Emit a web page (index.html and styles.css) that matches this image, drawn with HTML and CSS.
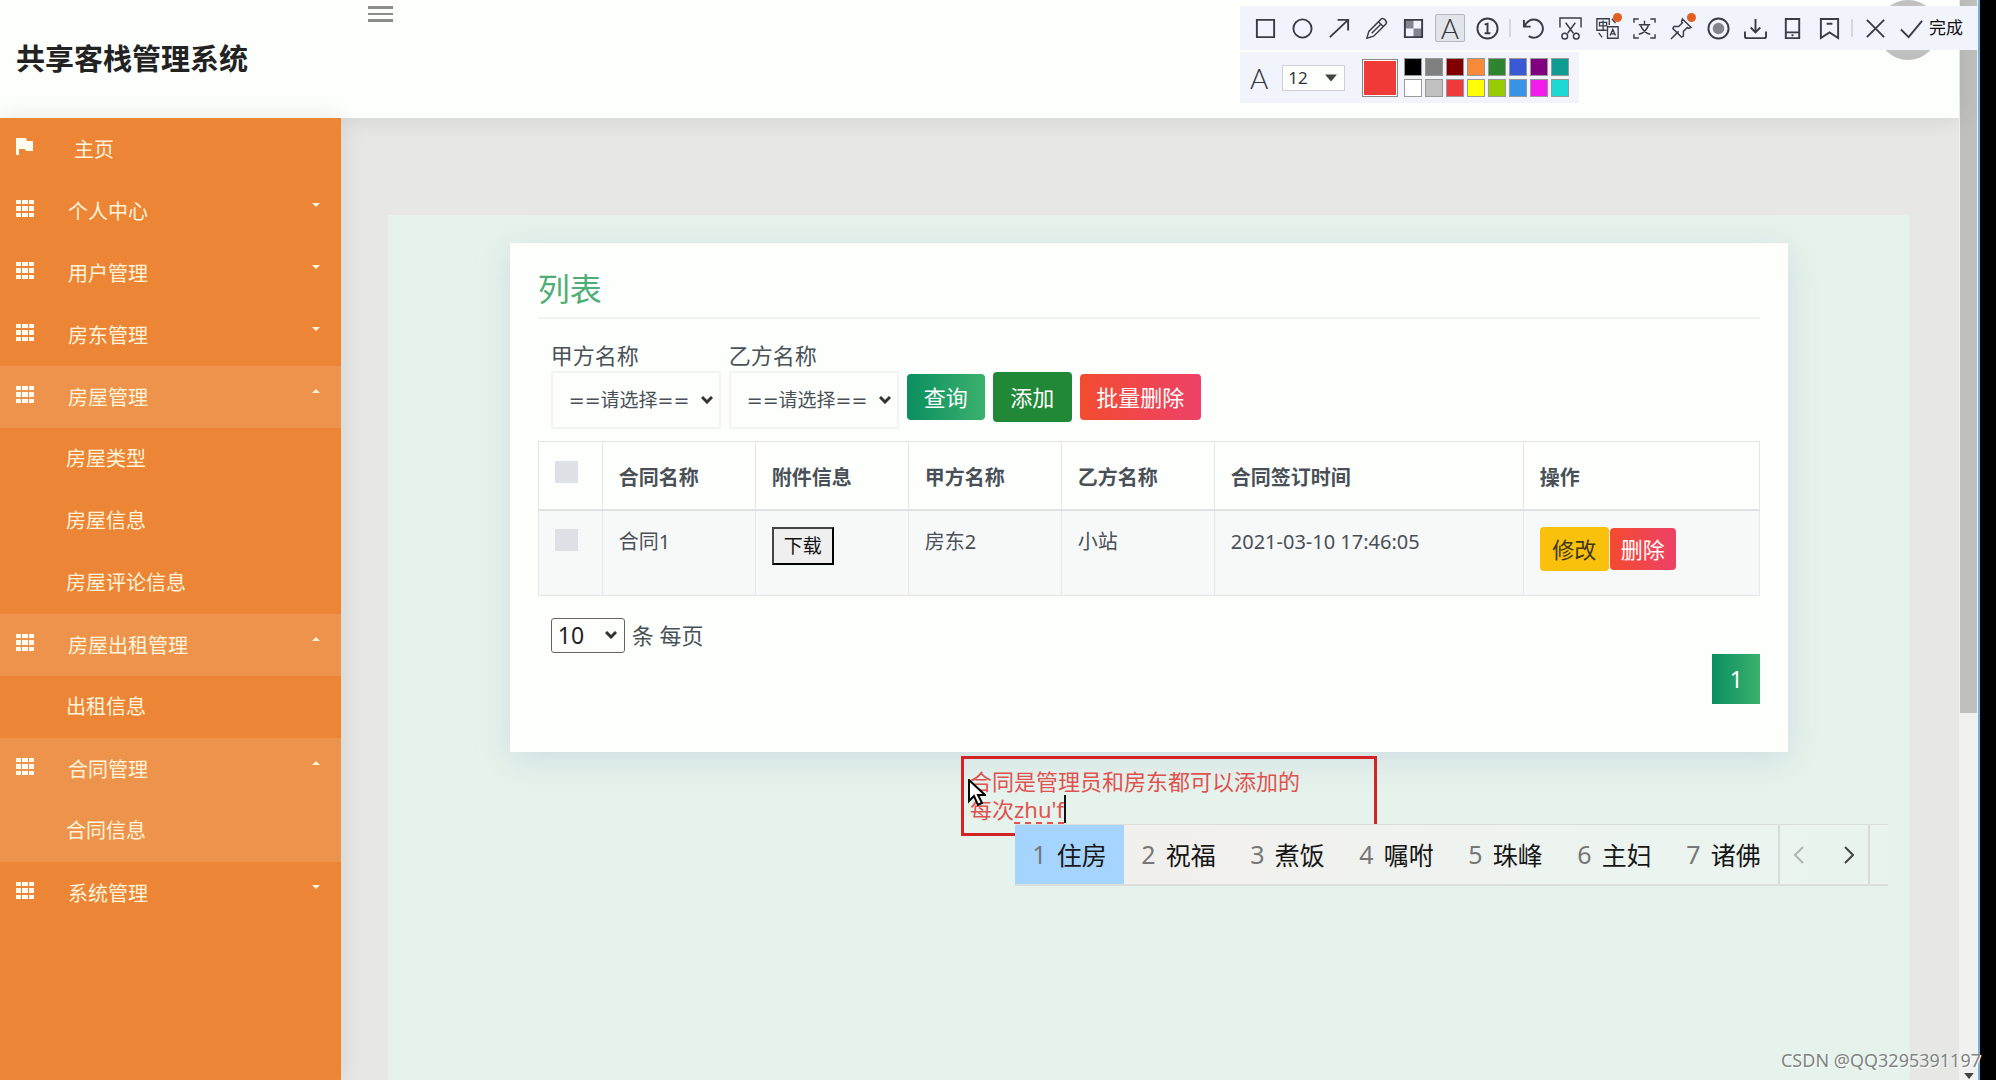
FILE: index.html
```html
<!DOCTYPE html>
<html lang="zh-CN">
<head>
<meta charset="utf-8">
<title>共享客栈管理系统</title>
<link rel="stylesheet" href="styles.css">
</head>
<body>
<svg class="sprite" aria-hidden="true">
  <symbol id="grid" viewBox="0 0 18 17"><path d="M0 0h5v4H0zM6 0h6v4H6zM13 0h5v4h-5zM0 6h5v5H0zM6 6h6v5H6zM13 6h5v5h-5zM0 13h5v4H0zM6 13h6v4H6zM13 13h5v4h-5z"/></symbol>
  <symbol id="flag" viewBox="0 0 18 17"><path d="M0 0h10l1 3h6v10h-7l-1-2H3v6H0z"/></symbol>
  <symbol id="down" viewBox="0 0 8 4"><path d="M0 0h8L4 4z"/></symbol>
  <symbol id="up" viewBox="0 0 8 4"><path d="M0 4h8L4 0z"/></symbol>
</svg>
<div class="screen">
  <div class="page">
    <header class="header">
      <h1 class="brand">共享客栈管理系统</h1>
      <button class="burger" aria-label="菜单"><i></i><i></i><i></i></button>
      <span class="avatar"></span>
    </header>
    <div class="body">
      <nav class="sidebar">
        <a class="item home" href="#"><svg class="icon"><use href="#flag"/></svg><span>主页</span></a>
        <a class="item" href="#"><svg class="icon"><use href="#grid"/></svg><span>个人中心</span><svg class="caret"><use href="#down"/></svg></a>
        <a class="item" href="#"><svg class="icon"><use href="#grid"/></svg><span>用户管理</span><svg class="caret"><use href="#down"/></svg></a>
        <a class="item" href="#"><svg class="icon"><use href="#grid"/></svg><span>房东管理</span><svg class="caret"><use href="#down"/></svg></a>
        <a class="item open" href="#"><svg class="icon"><use href="#grid"/></svg><span>房屋管理</span><svg class="caret"><use href="#up"/></svg></a>
        <a class="item sub" href="#">房屋类型</a>
        <a class="item sub" href="#">房屋信息</a>
        <a class="item sub" href="#">房屋评论信息</a>
        <a class="item open" href="#"><svg class="icon"><use href="#grid"/></svg><span>房屋出租管理</span><svg class="caret"><use href="#up"/></svg></a>
        <a class="item sub" href="#">出租信息</a>
        <a class="item open" href="#"><svg class="icon"><use href="#grid"/></svg><span>合同管理</span><svg class="caret"><use href="#up"/></svg></a>
        <a class="item sub open" href="#">合同信息</a>
        <a class="item" href="#"><svg class="icon"><use href="#grid"/></svg><span>系统管理</span><svg class="caret"><use href="#down"/></svg></a>
      </nav>
      <main class="main">
        <div class="panel">
          <section class="card">
            <h2 class="card-title">列表</h2>
            <form class="filters">
              <div class="field"><label for="party-a">甲方名称</label><span class="pick"><select id="party-a"><option>==请选择==</option></select><svg class="chev" viewBox="0 0 12 8"><path d="M1 1l5 5 5-5"/></svg></span></div>
              <div class="field"><label for="party-b">乙方名称</label><span class="pick"><select id="party-b"><option>==请选择==</option></select><svg class="chev" viewBox="0 0 12 8"><path d="M1 1l5 5 5-5"/></svg></span></div>
              <div class="actions">
                <button type="button" class="btn query">查询</button>
                <button type="button" class="btn add">添加</button>
                <button type="button" class="btn danger">批量删除</button>
              </div>
            </form>
            <table class="table">
              <colgroup><col class="c-check"><col class="c-text"><col class="c-text"><col class="c-text"><col class="c-text"><col class="c-date"><col></colgroup>
              <thead><tr><th><input type="checkbox" aria-label="全选"></th><th>合同名称</th><th>附件信息</th><th>甲方名称</th><th>乙方名称</th><th>合同签订时间</th><th>操作</th></tr></thead>
              <tbody><tr><td><input type="checkbox" aria-label="选择合同1"></td><td>合同1</td><td><button class="download">下载</button></td><td>房东2</td><td>小站</td><td>2021-03-10 17:46:05</td><td><div class="ops"><button class="btn edit">修改</button><button class="btn danger small">删除</button></div></td></tr></tbody>
            </table>
            <div class="per-page"><span class="pick"><select id="size"><option>10</option></select><svg class="chev" viewBox="0 0 12 8"><path d="M1 1l5 5 5-5"/></svg></span><label for="size">条 每页</label></div>
            <div class="pager"><button class="page-no">1</button></div>
          </section>
        </div>
      </main>
    </div>
  </div>
  <div class="scrollbar"><div class="thumb"></div><svg class="arrow" viewBox="0 0 8 5"><path d="M0 0h8L4 5z"/></svg></div>
  <div class="edge"></div>

  <div class="note">合同是管理员和房东都可以添加的<br>每次<u>zhu'f</u><i class="text-caret"></i></div>
  <svg class="pointer" viewBox="0 0 18 28"><path d="M1 1v21l5-5 4 9 4-2-4-8h7z" fill="#fff" stroke="#000" stroke-width="2"/></svg>

  <div class="ime">
    <ol class="cands">
      <li class="on"><b>1</b>住房</li><li><b>2</b>祝福</li><li><b>3</b>煮饭</li><li><b>4</b>嘱咐</li><li><b>5</b>珠峰</li><li><b>6</b>主妇</li><li><b>7</b>诸佛</li>
    </ol>
    <div class="turn">
      <button aria-label="上一页" class="off"><svg viewBox="0 0 10 18"><path d="M9 1L1 9l8 8"/></svg></button>
      <button aria-label="下一页"><svg viewBox="0 0 10 18"><path d="M1 1l8 8-8 8"/></svg></button>
    </div>
  </div>

  <div class="tools">
    <div class="bar">
      <button aria-label="矩形"><svg viewBox="0 0 24 24"><path d="M3 3h18v18H3z"/></svg></button>
      <button aria-label="椭圆"><svg viewBox="0 0 24 24"><circle cx="12" cy="12" r="9.5"/></svg></button>
      <button aria-label="箭头"><svg viewBox="0 0 24 24"><path d="M2 21L21 3M10 3h11v11"/></svg></button>
      <button aria-label="画笔"><svg class="fine" viewBox="0 0 24 24"><path d="M2 22l2-7L17 2q2-1 4 1t1 4L9 20zM14 5l5 5M7 17l9-9"/></svg></button>
      <button aria-label="马赛克"><svg viewBox="0 0 24 24"><path class="gray" d="M3 3h9v9H3zM12 12h9v9h-9z"/><path d="M3 3h18v18H3z"/></svg></button>
      <button aria-label="文字" class="active"><span class="letter">A</span></button>
      <button aria-label="序号"><svg viewBox="0 0 24 24"><circle cx="12" cy="12" r="10.5"/><path d="M9 8l3-1v10M9 17h6"/></svg></button>
      <i class="sep"></i>
      <button aria-label="撤销"><svg viewBox="0 0 24 24"><path d="M2 3v7h7M3 10A9.500 9.500 0 1 1 7 20"/></svg></button>
      <button aria-label="截取"><svg class="fine" viewBox="0 0 24 24"><path d="M1 11V1h22v10M7 6l8 11M17 6L9 17"/><circle cx="6" cy="20" r="3"/><circle cx="18" cy="20" r="3"/></svg></button>
      <button aria-label="翻译"><svg class="fine" viewBox="0 0 26 24"><path d="M12 14H1V1h14v7M13 10h12v13H13zM8 3v10M4 5h8v4H4zM3 17l4 5M18 1l4 5M16 20l3-7 3 7M17 18h4"/></svg><i class="dot"></i></button>
      <button aria-label="识别文字"><svg class="fine" viewBox="0 0 24 24"><path d="M1 6V2h5M18 2h5v4M23 18v4h-5M6 22H1v-4M12 4v4M6 8h12M8 9c2 5 5 8 10 9M16 9c-2 5-5 8-10 9"/></svg></button>
      <button aria-label="固定"><svg class="fine" viewBox="0 0 24 24"><path d="M1 23l8-8M13 2l9 9-3 1-1-1-4 4v5l-2 1-9-9 1-2h5l4-4-1-1z"/></svg><i class="dot"></i></button>
      <button aria-label="录制"><svg viewBox="0 0 24 24"><circle cx="12" cy="12" r="10.500"/><circle class="gray" cx="12" cy="12" r="6"/></svg></button>
      <button aria-label="保存"><svg viewBox="0 0 24 24"><path d="M12 2v14M7 11l5 5 5-5M1 15v5q0 2 2 2h18q2 0 2-2v-5"/></svg></button>
      <button aria-label="手机"><svg viewBox="0 0 24 24"><path d="M5 2h14v20H5zM5 16h14M11 19h2"/></svg></button>
      <button aria-label="收藏"><svg viewBox="0 0 24 24"><path d="M3 2h18v20l-9-6-9 6zM9 7h6"/></svg></button>
      <i class="sep"></i>
      <button aria-label="关闭"><svg viewBox="0 0 24 24"><path d="M3 3l18 18M21 3L3 21"/></svg></button>
      <button class="done"><svg viewBox="0 0 24 24"><path d="M1 13l8 8L23 4"/></svg>完成</button>
    </div>
    <div class="bar options">
      <span class="letter">A</span>
      <span class="pick"><select aria-label="字号"><option>12</option></select><svg class="tri" viewBox="0 0 12 7"><path d="M0 0h12L6 7z"/></svg></span>
      <i class="current"></i>
      <div class="swatches">
        <i class="s1"></i><i class="s2"></i><i class="s3"></i><i class="s4"></i><i class="s5"></i><i class="s6"></i><i class="s7"></i><i class="s8"></i>
        <i class="s9"></i><i class="s10"></i><i class="s11"></i><i class="s12"></i><i class="s13"></i><i class="s14"></i><i class="s15"></i><i class="s16"></i>
      </div>
    </div>
  </div>
  <div class="watermark">CSDN @QQ3295391197</div>
</div>
</body>
</html>
```
FILE: styles.css
```css
* { box-sizing: border-box; }
body { margin: 0; font-family: "Noto Sans", "Noto Sans CJK SC", sans-serif; color: #495057; }
button, select, input { font-family: inherit; color: inherit; margin: 0; }
button { padding: 0; border: 0; background: none; }
select { appearance: none; background: none; }
a { text-decoration: none; }
.sprite { display: none; }

.screen { position: relative; display: flex; min-height: 100vh; overflow: hidden; }
.page { flex: 1; min-width: 0; display: flex; flex-direction: column; background: #e7e8e6; }

/* header */
.header { position: relative; z-index: 1; display: flex; height: 118px; background: #fdfffd; box-shadow: 0 0 24px #0000001a; }
.brand { width: 341px; margin: 0; padding: 38px 16px; font-size: 29px; line-height: 42px; color: #222; }
.burger { display: flex; flex-direction: column; gap: 4px; width: 25px; height: 16px; margin: 6px 27px; }
.burger i { height: 3px; background: #8c8c8c; }
.avatar { width: 60px; height: 60px; margin: 0 21px 0 auto; border-radius: 50%; background: #bfc0bf; }

/* sidebar */
.body { flex: 1; display: flex; }
.sidebar { position: relative; z-index: 2; width: 341px; flex: none; background: #ed8536; box-shadow: 0 0 24px #00000018; }
.item { display: flex; align-items: center; height: 62px; padding: 0 21px 2px 16px; font-size: 20px; color: #fff4da; }
.item span { margin-left: 34px; }
.home span { margin-left: 40px; }
.sub { padding-left: 66px; padding-bottom: 4px; }
.open { background: #ee934c; }
.icon { width: 18px; height: 17px; margin-bottom: 4px; fill: #fffbee; }
.caret { width: 8px; height: 4px; margin: 0 0 10px auto; fill: #fff4da; }

/* content */
.main { flex: 1; min-width: 0; display: flex; padding: 97px 49px 0 47px; }
.panel { flex: 1; min-width: 0; padding: 28px 8%; background: #e6f3ec; }
.card { padding: 26px 28px 48px; background: #fdfffd; box-shadow: 0 8px 32px #a0b0d055; }
.card-title { margin: 0 0 16px; padding-bottom: 8px; border-bottom: 2px solid #f0f1f1; font-size: 32px; font-weight: 400; line-height: 40px; color: #4fae75; }
.filters { display: flex; gap: 8px; padding: 4px 13px 0; margin-bottom: 12px; }
.field { width: 170px; font-size: 22px; line-height: 32px; }
.field label { display: block; }
.pick { position: relative; display: block; }
.field select { width: 100%; height: 58px; padding: 0 16px; border: 2px solid #f2f4f4; font-family: "DejaVu Sans", "Noto Sans CJK SC", sans-serif; font-size: 19px; }
.chev, .tri { position: absolute; right: 8px; top: 50%; width: 12px; height: 8px; margin-top: -4px; fill: none; stroke: #333; stroke-width: 3; pointer-events: none; }
.actions { display: flex; align-items: center; gap: 8px; height: 50px; margin-top: 33px; }
.btn { height: 46px; border-radius: 4px; font-size: 22px; line-height: 32px; color: #fff; }
.query { width: 78px; background: linear-gradient(90deg, #0b8e61, #3bb16d); }
.add { width: 79px; height: 50px; background: #218838; }
.danger { width: 121px; background: linear-gradient(90deg, #f24b30, #ee4168); }

.table { width: 100%; table-layout: fixed; border-collapse: collapse; font-size: 20px; line-height: 30px; }
.c-check { width: 64px; }
.c-text { width: 153px; }
.c-date { width: 309px; }
.table th, .table td { padding: 16px 16px; border: 1px solid #e3e6e6; text-align: left; vertical-align: top; }
.table th { height: 68px; padding-top: 21px; border-bottom: 2px solid #dfe3e4; }
.table td { height: 85px; background: #f7f9f9; }
.table input { display: block; appearance: none; width: 23px; height: 22px; background: #dee1e5; }
.table th input { margin-top: -2px; }
.table td input { margin-top: 2px; }
.download { display: block; width: 62px; height: 38px; border: 2px outset #444; background: #efefef; font-size: 19px; line-height: 30px; color: #111; }
.ops { display: flex; align-items: center; gap: 1px; height: 44px; }
.edit { width: 69px; height: 44px; background: #f9c10b; color: #40361a; }
.small { width: 66px; height: 42px; }

.per-page { display: flex; align-items: center; gap: 7px; padding: 22px 13px 0; font-size: 22px; line-height: 34px; }
.per-page select { display: block; width: 74px; height: 35px; padding: 0 6px; border: 1px solid #666; border-radius: 3px; font-size: 23px; color: #222; }
.pager { display: flex; justify-content: flex-end; padding-top: 1px; }
.page-no { width: 48px; height: 50px; background: linear-gradient(90deg, #0b8e61, #3bb16d); font-size: 23px; color: #fff; }

/* window edge */
.scrollbar { display: flex; flex-direction: column; justify-content: space-between; align-items: center; width: 21px; padding-bottom: 1px; border-right: 2px solid #6fb2dc; background: #f1f2ef; }
.thumb { width: 17px; height: 713px; background: #bfc0be; }
.arrow { width: 10px; height: 6px; fill: #444; }
.edge { width: 16px; background: #000; }

/* annotation */
.note { position: absolute; left: 961px; top: 756px; width: 416px; height: 80px; padding: 8px 6px; border: 3px solid #d22424; font-size: 22px; line-height: 28px; color: #e05250; }
.note u { text-decoration: underline dashed 2px; text-underline-offset: 4px; }
.text-caret { display: inline-block; width: 2px; height: 28px; background: #111; vertical-align: bottom; }
.pointer { position: absolute; left: 968px; top: 779px; width: 18px; height: 28px; }

/* input method candidates */
.ime { position: absolute; left: 1015px; top: 824px; display: flex; width: 873px; height: 62px; border: solid #dadfda; border-width: 1px 0 2px; background: linear-gradient(90deg, #f2f0ed 20%, #edf4f0 65%, #e9f4ee); }
.cands { display: flex; width: 763px; margin: 0; padding: 0; list-style: none; font-size: 25px; color: #171717; }
.cands li { flex: 1; display: flex; align-items: center; justify-content: center; gap: 10px; padding-bottom: 2px; }
.cands b { font-weight: 400; color: #777; }
.cands .on { background: #a5d5ff; }
.turn { display: flex; justify-content: space-between; width: 92px; padding: 0 14px; border: solid #d8ddd9; border-width: 0 2px; }
.turn button { display: flex; align-items: center; }
.turn svg { width: 10px; height: 18px; fill: none; stroke: #444; stroke-width: 2; }
.turn .off svg { stroke: #b0b5b2; }

/* capture toolbar */
.tools { position: absolute; right: 18px; top: 6px; z-index: 3; display: flex; flex-direction: column; align-items: flex-start; gap: 2px; }
.bar { display: flex; align-items: center; width: 738px; height: 44px; padding: 0 10px; background: #f1f4fa; color: #34343c; }
.bar button { position: relative; display: flex; align-items: center; justify-content: center; width: 30px; height: 28px; margin-right: 7px; }
.bar button svg { width: 23px; height: 23px; flex: none; fill: none; stroke: #3b3b46; stroke-width: 2; }
.bar button .fine { stroke-width: 1.5; }
.bar svg .gray { fill: #858590; stroke: none; }
.bar .active { border: 1px solid #b5b8be; border-radius: 2px; background: #e1e4e9; }
.letter { font: 300 28px/28px Lato, sans-serif; }
.sep { width: 2px; height: 18px; margin: 0 7px 0 0; background: #d5d7dc; }
.dot { position: absolute; right: 0; top: -1px; width: 9px; height: 9px; border-radius: 50%; background: #e35d24; }
.bar .done { width: auto; margin: 0 0 0 3px; gap: 6px; font-size: 17px; line-height: 22px; color: #111; white-space: nowrap; }
.options { width: 339px; height: 51px; }
.options .pick { margin: 0 17px 0 14px; }
.options select { display: block; width: 63px; height: 26px; padding: 0 5px; border: 1px solid #d0d0d0; background: #fdfffd; font-size: 17px; line-height: 24px; }
.tri { fill: #444; stroke: none; }
.current { width: 38px; height: 38px; margin-right: 6px; border: 1px solid #888; background: #f03a38; box-shadow: inset 0 0 0 1px #fff; }
.swatches { display: grid; grid-template-columns: repeat(8, 18px); gap: 3px; }
.swatches i { height: 18px; border: 1px solid #999; }
.s1 { background: #000; } .s2 { background: #808080; } .s3 { background: #800000; } .s4 { background: #f78b3b; }
.s5 { background: #2f8431; } .s6 { background: #3858d6; } .s7 { background: #800080; } .s8 { background: #109b95; }
.s9 { background: #fff; } .s10 { background: #c0c0c0; } .s11 { background: #f03a3a; } .s12 { background: #ff0; }
.s13 { background: #9c0; } .s14 { background: #3894e4; } .s15 { background: #f31ced; } .s16 { background: #1bd9d2; }

.watermark { position: absolute; right: 15px; bottom: 7px; font: 18px/26px "Noto Sans", sans-serif; color: #808482; text-shadow: 1px 1px 0 #fff; }
```
